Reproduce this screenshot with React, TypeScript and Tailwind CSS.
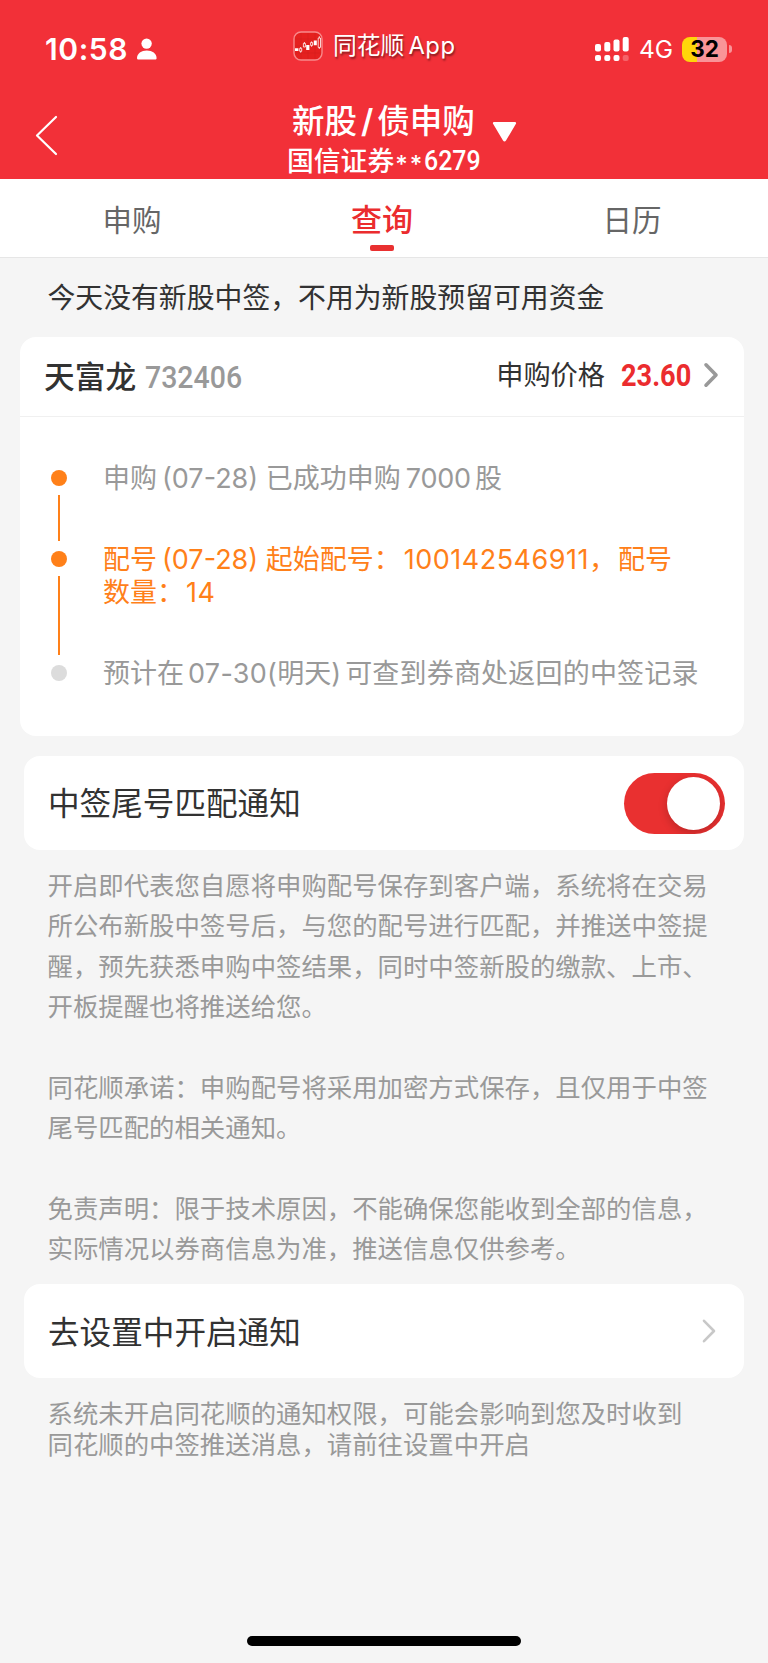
// src/routes/subscription-query.tsx
import type { ReactNode } from 'react';

const tabs = ['申购', '查询', '日历'];

const notes = [
  ['开启即代表您自愿将申购配号保存到客户端，系统将在交易', '所公布新股中签号后，与您的配号进行匹配，并推送中签提', '醒，预先获悉申购中签结果，同时中签新股的缴款、上市、', '开板提醒也将推送给您。'],
  ['同花顺承诺：申购配号将采用加密方式保存，且仅用于中签', '尾号匹配的相关通知。'],
  ['免责声明：限于技术原因，不能确保您能收到全部的信息，', '实际情况以券商信息为准，推送信息仅供参考。'],
];

// Small candlestick logo shown in the status bar
function AppLogo() {
  return (
    <svg width="30" height="30" viewBox="0 0 30 30" fill="none">
      <rect x="1" y="1" width="28" height="28" rx="7" fill="#e5201f" stroke="#f8898b" strokeWidth="1.4" />
      <path d="M2 8h26M2 15h26M2 22h26M8 2v26M15 2v26M22 2v26" stroke="#d21d1f" strokeWidth="0.5" />
      <path d="M2 17.2h3.4v2.9H2zM13.2 14h3.2v5h-3.2zM20.8 9.500h3v4.800h-3z" fill="#fff" />
      <path d="M6.700 17.300h2v3h-2zM7.700 16v1.300M7.700 20.300v1.400M10.400 12.400h2v3.600h-2zM11.400 11v1.400M17.600 11.600h2v2.800h-2zM18.600 10.400v1.200M18.600 14.400v1.400M25.200 7h2.300v9.400h-2.300zM26.300 5.200V7M26.300 16.400V18" stroke="#fff" strokeWidth="0.8" />
    </svg>
  );
}

function Chevron({ color, width }: { color: string; width: number }) {
  return (
    <svg width="16" height="26" viewBox="0 0 16 26" fill="none">
      <path d="M3 2.800l10 10.200L3 23.200" stroke={color} strokeWidth={width} strokeLinecap="round" strokeLinejoin="round" />
    </svg>
  );
}

function StatusBar() {
  return (
    <div className="flex h-[98px] items-start">
      <div className="flex w-[293px] items-center pt-[31px] pl-[45px]">
        <span className="w-[86px] text-[30px] leading-9 font-semibold tracking-[0.6px]">10:58</span>
        <svg className="ml-[5px]" width="22" height="24" viewBox="0 0 22 24" fill="#fff">
          <circle cx="10.6" cy="6.6" r="5.2" />
          <path d="M1 21c0-4.600 4.400-7.600 9.800-7.600s9.800 3 9.800 7.600c0 1-.6 1.500-1.600 1.500H2.600C1.600 22.500 1 22 1 21z" />
        </svg>
      </div>
      <div className="flex w-[302px] items-center pt-[29px]">
        <AppLogo />
        <span className="ml-[10px] pt-px text-[23.800px] leading-[32px] [text-shadow:1px_2px_2px_rgba(0,0,0,0.45)]">
          同花顺<span className="ml-1 tracking-[0.5px]">App</span>
        </span>
      </div>
      <div className="flex items-center pt-[32px]">
        <svg className="mt-px" width="34" height="26" viewBox="0 4 34 26" fill="#fff">
          <rect x="0" y="11" width="6" height="7.500" rx="2" />
          <rect x="9.300" y="9" width="6" height="9.500" rx="2" />
          <rect x="18.500" y="6.500" width="6" height="12" rx="2" />
          <rect x="27.700" y="4" width="6" height="14.500" rx="2" />
          <rect x="0" y="22" width="6" height="6" rx="2" />
          <rect x="9.300" y="22" width="6" height="6" rx="2" />
          <rect x="18.500" y="22" width="6" height="6" rx="2" />
          <rect x="27.700" y="22" width="6" height="6" rx="2" fillOpacity="0.25" />
        </svg>
        <span className="ml-[10px] w-[34px] text-[24.500px] leading-[34px]">4G</span>
        <div className="ml-[9px] flex h-[25px] w-[45px] items-center justify-center rounded-[8px] bg-linear-to-r from-[#ffd60a] from-[33%] to-[#f99498] to-[33%] text-[22.500px] font-bold text-black">
          32
        </div>
        <div className="ml-[2px] h-[8px] w-[3px] rounded-r-full bg-[#f99498]" />
      </div>
    </div>
  );
}

function TitleBar() {
  return (
    <div className="flex h-[81px]">
      <svg className="mt-[16px] ml-[34px]" width="26" height="44" viewBox="0 0 26 44" fill="none">
        <path d="M22 3L3 21.500L22 40" stroke="#fff" strokeWidth="2.200" strokeLinecap="round" strokeLinejoin="round" />
      </svg>
      <div className="ml-[227px] w-[205px]">
        <div className="ml-[5px] flex h-[49px] items-center text-[32.500px] font-medium">
          新股<span className="mx-[4px] font-semibold">/</span>债申购
        </div>
        <div className="flex h-[28px] items-center text-[26.800px] font-medium">
          国信证券<span className="ml-px w-[29px] translate-y-1 font-[Inter] text-[24px] tracking-[2px]">**</span>
          <span className="origin-left scale-x-[0.89] font-[Roboto] text-[28px] font-medium">6279</span>
        </div>
      </div>
      <svg className="mt-[24px]" width="26" height="21" viewBox="0 0 26 21" fill="#fff">
        <path d="M2.500 0h20c1.500 0 2 1 1.300 2L14 18.600c-.8 1.200-2.200 1.200-3 0L1.200 2C.5 1 1 0 2.500 0z" />
      </svg>
    </div>
  );
}

function Tabs() {
  return (
    <nav className="flex h-[79px] border-b border-[#e6e6e6] bg-white pr-[11px] pl-[7px]">
      {tabs.map(tab => (
        <div key={tab} className="flex flex-1 flex-col items-center">
          {tab === '查询' ? (
            <>
              <span className="mt-[20px] text-[31px] leading-[42px] font-medium text-[#eb2c2e]">{tab}</span>
              <span className="mt-1 h-[6px] w-[24px] rounded-[2px] bg-[#e93030]" />
            </>
          ) : (
            <span className="mt-[20px] text-[29.500px] leading-[42px] text-[#666]">{tab}</span>
          )}
        </div>
      ))}
    </nav>
  );
}

// One entry of the subscription timeline, with the line down to the next one
function Step({ dot, line, children }: { dot: string; line?: string; children: ReactNode }) {
  return (
    <div className="flex">
      <div className="flex w-[16px] flex-col items-center">
        <span className={`mt-[8px] size-[16px] shrink-0 rounded-full ${dot}`} />
        {line && <span className={`mt-[9px] w-[2.500px] bg-[#ff8019] ${line}`} />}
      </div>
      <div className="ml-[36px] text-[27px] leading-[33px] whitespace-nowrap">{children}</div>
    </div>
  );
}

function StockCard() {
  return (
    <section className="mr-6 ml-5 h-[399px] rounded-[16px] bg-white">
      <div className="flex h-[80px] items-center border-b border-[#f0f0f0] pr-[25px] pl-[24px]">
        <span className="pt-[2px] text-[30.700px] font-medium text-[#323232]">天富龙</span>
        <span className="ml-[9px] origin-left scale-x-[0.89] font-[Roboto] text-[32px] font-medium text-[#999]">732406</span>
        <span className="ml-auto text-[27.200px] text-[#323232]">申购价格</span>
        <span className="ml-[16px] w-[80px] origin-left scale-x-[0.85] pb-[4px] font-[Roboto] text-[32px] font-bold text-[#eb2c2e]">23.60</span>
        <span className="ml-[2px] pb-[4px]">
          <Chevron color="#999" width={3.6} />
        </span>
      </div>
      <div className="flex flex-col pt-[45px] pl-[31px] text-[#999]">
        <div className="h-[81px]">
          <Step dot="bg-[#ff8019]" line="h-[46px]">
            申购<span className="ml-[5px]">(07-28)</span> 已成功申购<span className="mr-[4px] ml-[5px] tracking-[-0.200px]">7000</span>股
          </Step>
        </div>
        <div className="h-[114px] text-[#ff8019]">
          <Step dot="bg-[#ff8019]" line="h-[79px]">
            配号<span className="ml-[5px]">(07-28)</span> 起始配号：<span className="ml-[3px] tracking-[0.500px]">100142546911</span>，<span className="ml-[2px]">配号</span>
            <br />
            数量：<span className="ml-[2px] tracking-[0.500px]">14</span>
          </Step>
        </div>
        <Step dot="bg-[#dcdcdc]">
          预计在<span className="ml-[4px] tracking-[0.300px]">07-30(</span>明天<span className="mr-[4px]">)</span><span className="tracking-[0.200px]">可查到券商处返回的中签记录</span>
        </Step>
      </div>
    </section>
  );
}

export default function App() {
  return (
    <main className="flex h-[1663px] w-[768px] flex-col overflow-hidden bg-[#f5f5f5] font-[Inter,'Noto_Sans_CJK_SC',sans-serif]">
      <header className="h-[179px] shrink-0 bg-[#f23038] text-white">
        <StatusBar />
        <TitleBar />
      </header>
      <Tabs />

      <p className="h-[79px] shrink-0 pl-[47.500px] text-[27.850px] leading-[81px] text-[#323232]">今天没有新股中签，不用为新股预留可用资金</p>
      <StockCard />

      {/* Notification switch */}
      <section className="mt-[20px] mr-6 ml-6 flex h-[94px] items-center justify-between rounded-[16px] bg-white pr-[19px] pl-[24px]">
        <span className="pt-[2px] text-[31.600px] text-[#323232]">中签尾号匹配通知</span>
        <div className="flex h-[61px] w-[101px] items-center justify-end overflow-hidden rounded-full bg-[#e93030] pr-[5px]">
          <span className="size-[53px] rounded-full bg-white shadow-[0_3px_10px_rgba(0,0,0,0.2)]" />
        </div>
      </section>

      <div className="mt-[16px] flex flex-col gap-[40.350px] pl-[47.500px] text-[25.400px] leading-[40.350px] whitespace-nowrap text-[#999]">
        {notes.map(lines => (
          <div key={lines[0]}>
            {lines.map(line => <p key={line}>{line}</p>)}
          </div>
        ))}
      </div>

      {/* Link to the system settings */}
      <section className="mt-[15px] mr-6 ml-6 flex h-[94px] shrink-0 items-center justify-between rounded-[16px] bg-white pr-[27px] pl-[24px]">
        <span className="pt-[2px] text-[31.600px] text-[#323232]">去设置中开启通知</span>
        <Chevron color="#c8c8c8" width={2.6} />
      </section>
      <div className="mt-[21px] pl-[47.500px] text-[25.400px] leading-[30.500px] text-[#999]">
        <p>系统未开启同花顺的通知权限，可能会影响到您及时收到</p>
        <p>同花顺的中签推送消息，请前往设置中开启</p>
      </div>

      <div className="mt-auto mb-[17px] ml-[247px] h-[10px] w-[274px] shrink-0 rounded-full bg-black" />
    </main>
  );
}
